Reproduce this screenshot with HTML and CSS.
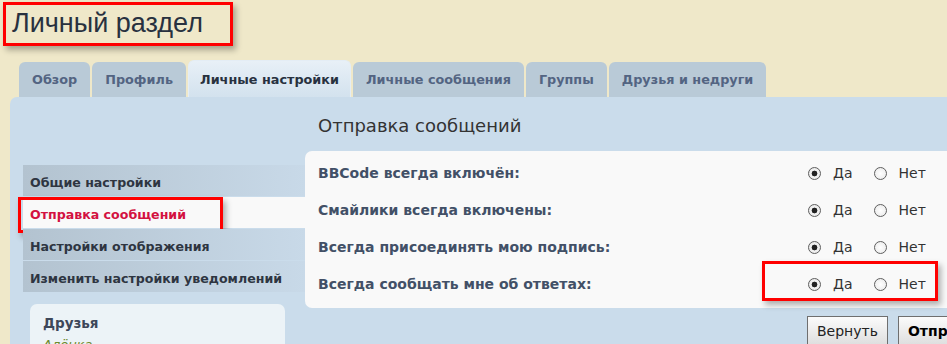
FILE: index.html
```html
<!DOCTYPE html>
<html lang="ru">
<head>
    <meta charset="UTF-8">
    <title>Личный раздел</title>
    <link rel="stylesheet" href="styles.css">
</head>
<body>
    <div class="page">
        <h1 class="title">Личный раздел</h1>
        <ul class="tabs">
            <li class="tab">Обзор</li>
            <li class="tab">Профиль</li>
            <li class="tab active">Личные настройки</li>
            <li class="tab">Личные сообщения</li>
            <li class="tab">Группы</li>
            <li class="tab">Друзья и недруги</li>
        </ul>
        <div class="panel">
            <div class="side">
                <ul class="menu">
                    <li class="menu-item">Общие настройки</li>
                    <li class="menu-item active">Отправка сообщений<span class="mark"></span></li>
                    <li class="menu-item">Настройки отображения</li>
                    <li class="menu-item">Изменить настройки уведомлений</li>
                </ul>
                <div class="friends">
                    <h3>Друзья</h3>
                    <p class="friend">Алёнка</p>
                </div>
            </div>
            <div class="main">
                <h2 class="heading">Отправка сообщений</h2>
                <div class="content">
                    <div class="row">
                        <span class="label">BBCode всегда включён:</span>
                        <label class="opt"><input type="radio" name="bbcode" checked>Да</label>
                        <label class="opt"><input type="radio" name="bbcode">Нет</label>
                    </div>
                    <div class="row">
                        <span class="label">Смайлики всегда включены:</span>
                        <label class="opt"><input type="radio" name="smilies" checked>Да</label>
                        <label class="opt"><input type="radio" name="smilies">Нет</label>
                    </div>
                    <div class="row">
                        <span class="label">Всегда присоединять мою подпись:</span>
                        <label class="opt"><input type="radio" name="sig" checked>Да</label>
                        <label class="opt"><input type="radio" name="sig">Нет</label>
                    </div>
                    <div class="row">
                        <span class="label">Всегда сообщать мне об ответах:</span>
                        <label class="opt"><input type="radio" name="notify" checked>Да</label>
                        <label class="opt"><input type="radio" name="notify">Нет</label>
                        <span class="mark mark-row"></span>
                    </div>
                </div>
                <div class="buttons">
                    <button class="btn">Вернуть</button>
                    <button class="btn btn-main">Отправить</button>
                </div>
            </div>
        </div>
    </div>
</body>
</html>
```
FILE: styles.css
```css
html, body {
    overflow: hidden;
}
body {
    margin: 0;
    background-color: #efe8c9;
    font-family: 'DejaVu Sans', Verdana, sans-serif;
    color: #333;
}
.page {
    width: 1100px;
}
.title {
    box-sizing: border-box;
    width: 230px;
    height: 44px;
    margin: 2px 0 0 3px;
    padding: 3px 0 0 6px;
    border: 3px solid #ff0000;
    box-shadow: 3px 4px 6px rgba(0, 0, 0, 0.3);
    font-family: 'Liberation Sans', Arial, sans-serif;
    font-size: 27px;
    line-height: 31px;
    font-weight: normal;
    color: #28313f;
}
.tabs {
    display: flex;
    align-items: flex-end;
    gap: 2px;
    list-style: none;
    margin: 14px 0 0;
    padding: 0 0 0 19px;
}
.tab {
    height: 35px;
    line-height: 35px;
    padding: 0 13px;
    background: #b9cad7;
    border-radius: 6px 6px 0 0;
    color: #536482;
    font-size: 12.8px;
    font-weight: bold;
}
.tab.active {
    box-sizing: border-box;
    height: 37px;
    line-height: 37px;
    padding: 0 11px;
    background: linear-gradient(#e8f0f7, #d3e2ee);
    border: 1px solid #e4edf5;
    border-bottom: none;
    color: #28313f;
}
.panel {
    display: flex;
    margin-left: 10px;
    padding-left: 13px;
    background: #cadceb;
    border-radius: 7px 0 0 0;
    height: 260px;
}
.side {
    width: 282px;
    padding-top: 68px;
}
.menu {
    list-style: none;
    margin: 0;
    padding: 0;
}
.menu-item {
    position: relative;
    box-sizing: border-box;
    height: 31px;
    line-height: 31px;
    padding: 2px 0 0 7px;
    margin-bottom: 1px;
    background: linear-gradient(to right, #b3c3d0, #c8d9e8);
    font-size: 12.6px;
    font-weight: bold;
    color: #2e3541;
}
.menu-item.active {
    background: #f9f9f9;
    color: #d31141;
}
.mark {
    position: absolute;
    left: -5px;
    top: 0;
    width: 205px;
    height: 36px;
    box-sizing: border-box;
    border: 3px solid #ff0000;
    box-shadow: 3px 4px 6px rgba(0, 0, 0, 0.3);
}
.friends {
    width: 255px;
    margin: 12px 0 0 7px;
    padding: 11px 13px;
    box-sizing: border-box;
    background: #ecf3f7;
    border-radius: 7px;
}
.friends h3 {
    margin: 0;
    font-size: 13.5px;
    line-height: 16px;
    color: #3d4759;
}
.friend {
    margin: 6px 0 0;
    font-size: 13px;
    font-style: italic;
    color: #6c8a2c;
}
.main {
    flex: 1;
}
.heading {
    margin: 0;
    padding: 18px 0 14px 13px;
    font-size: 18px;
    line-height: 22px;
    font-weight: normal;
    color: #333;
}
.content {
    padding: 3px 0 6px;
    background: #f9f9f9;
    border-radius: 7px 0 0 7px;
}
.row {
    position: relative;
    display: flex;
    align-items: center;
    height: 37px;
    padding-left: 13px;
}
.label {
    flex: 0 0 490px;
    font-size: 14px;
    font-weight: bold;
    color: #425067;
}
.opt {
    display: flex;
    align-items: center;
    margin-right: 21px;
    font-size: 14px;
    color: #333;
}
.opt input {
    appearance: none;
    width: 13px;
    height: 13px;
    margin: 2px 12px 0 0;
    border: 1px solid #5f5f5f;
    border-radius: 50%;
    background: radial-gradient(circle, #fff 0, #e8e8e8 100%);
}
.opt input:checked {
    background: radial-gradient(circle, #222 0, #222 2.6px, #f4f4f4 3.2px, #e0e0e0 100%);
}
.mark-row {
    left: 457px;
    top: -4px;
    width: 176px;
    height: 40px;
}
.buttons {
    display: flex;
    gap: 10px;
    padding: 8px 0 0 502px;
}
.btn {
    height: 30px;
    padding: 0 9px;
    border: 1px solid #6f6f6f;
    background: linear-gradient(#fbfbfb, #dedede);
    font-family: 'DejaVu Sans', Verdana, sans-serif;
    font-size: 14px;
    color: #222;
}
.btn-main {
    font-weight: bold;
    color: #000;
}
```
